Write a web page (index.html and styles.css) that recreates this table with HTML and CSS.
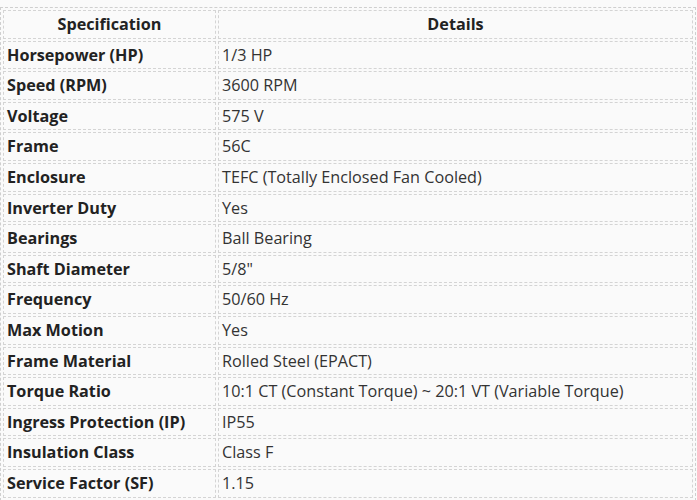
FILE: index.html
```html
<!DOCTYPE html>
<html>
<head>
<meta charset="utf-8">
<link rel="stylesheet" href="styles.css">
</head>
<body>
<table class="spec">
  <thead>
    <tr><th class="col-name">Specification</th><th class="col-val">Details</th></tr>
  </thead>
  <tbody>
    <tr><td class="name">Horsepower (HP)</td><td>1/3 HP</td></tr>
    <tr><td class="name">Speed (RPM)</td><td>3600 RPM</td></tr>
    <tr><td class="name">Voltage</td><td>575 V</td></tr>
    <tr><td class="name">Frame</td><td>56C</td></tr>
    <tr><td class="name">Enclosure</td><td>TEFC (Totally Enclosed Fan Cooled)</td></tr>
    <tr><td class="name">Inverter Duty</td><td>Yes</td></tr>
    <tr><td class="name">Bearings</td><td>Ball Bearing</td></tr>
    <tr><td class="name">Shaft Diameter</td><td>5/8"</td></tr>
    <tr><td class="name">Frequency</td><td>50/60 Hz</td></tr>
    <tr><td class="name">Max Motion</td><td>Yes</td></tr>
    <tr><td class="name">Frame Material</td><td>Rolled Steel (EPACT)</td></tr>
    <tr><td class="name">Torque Ratio</td><td>10:1 CT (Constant Torque) ~ 20:1 VT (Variable Torque)</td></tr>
    <tr><td class="name">Ingress Protection (IP)</td><td>IP55</td></tr>
    <tr><td class="name">Insulation Class</td><td>Class F</td></tr>
    <tr><td class="name">Service Factor (SF)</td><td>1.15</td></tr>
  </tbody>
</table>
</body>
</html>
```
FILE: styles.css
```css
html, body {
  margin: 0;
  padding: 0;
  background: #fafafa;
}
body {
  padding: 7px 0 0 0;
  font-family: "Open Sans", "Noto Sans", sans-serif;
  font-size: 16.2px;
  color: #333;
}
.spec {
  width: 696px;
  table-layout: fixed;
  border-collapse: separate;
  border-spacing: 2px;
  border: 1px dashed #cfcfcf;
}
.spec th, .spec td {
  border: 1px dashed #d4d4d4;
  padding: 4px 3px;
  line-height: 18.6px;
  text-align: left;
  white-space: nowrap;
}
.spec th {
  text-align: center;
  font-weight: 700;
  color: #222;
}
.col-name { width: 205px; }
.spec td.name {
  font-weight: 700;
  color: #222;
}
```
